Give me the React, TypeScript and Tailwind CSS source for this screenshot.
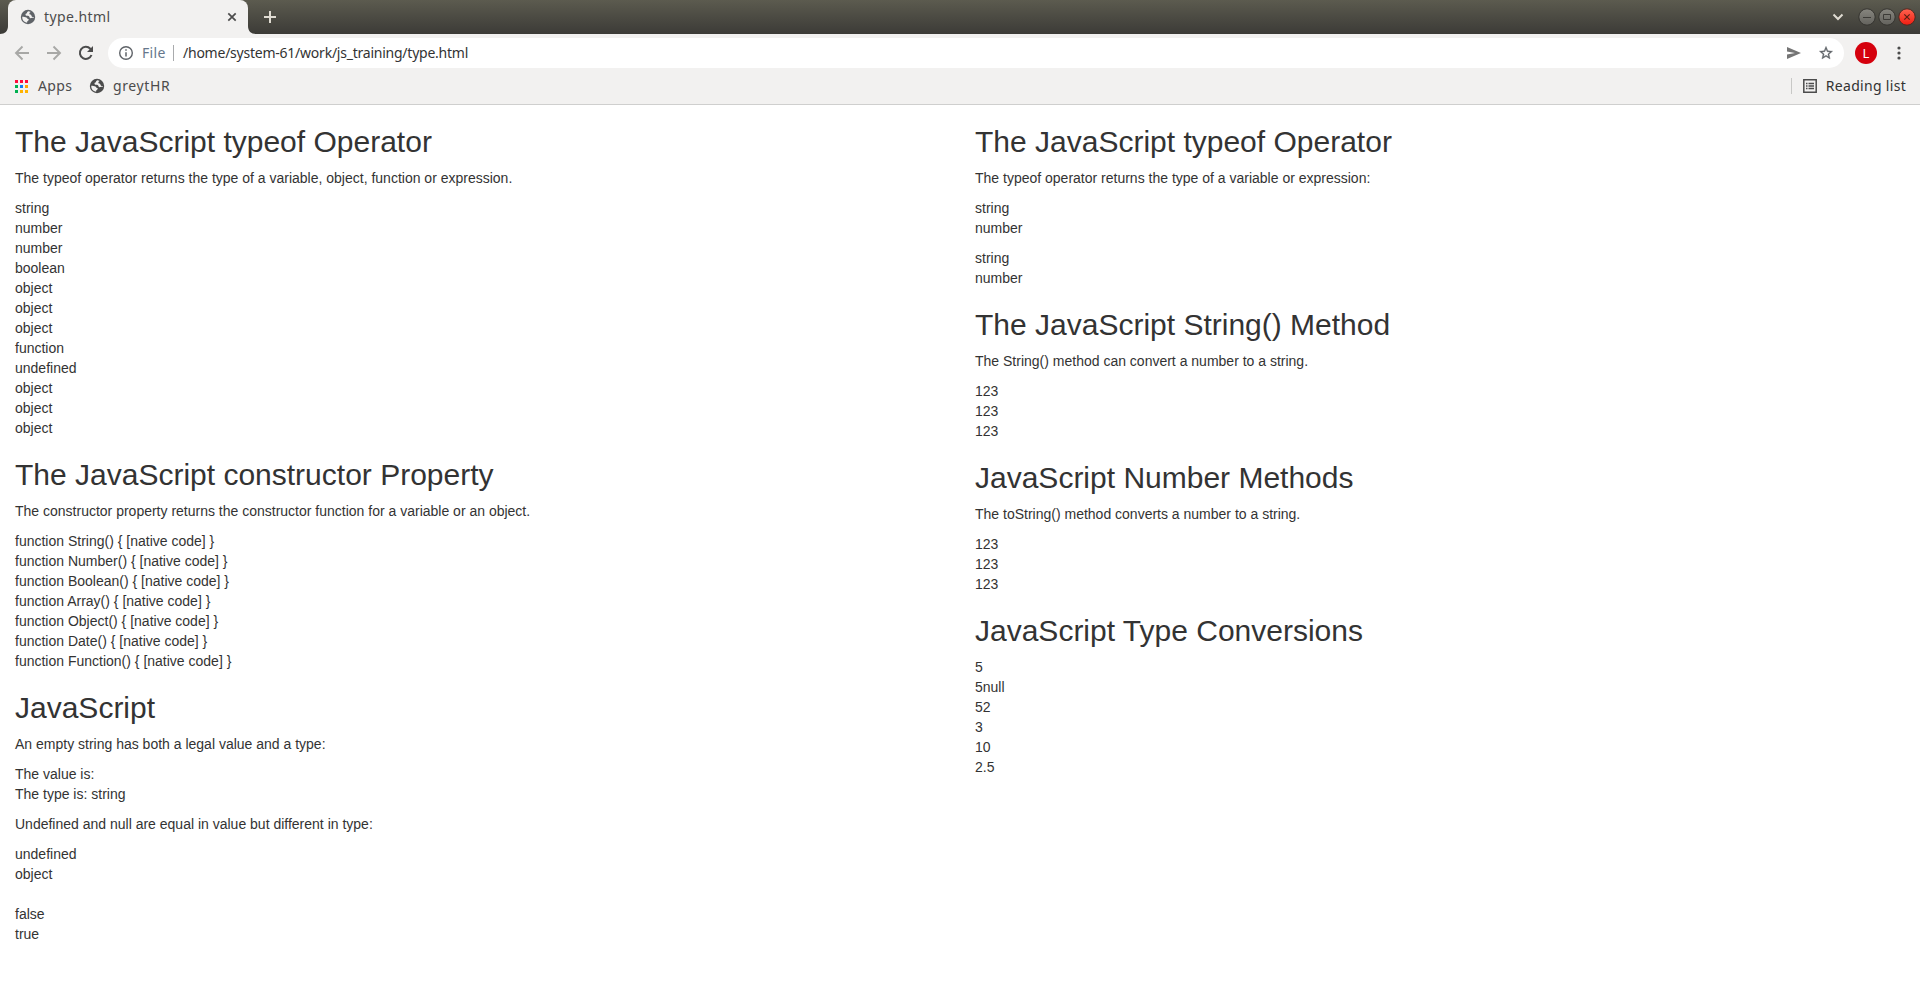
import React from "react";

type Block = { kind: "h" | "p"; lines: string[] };

const left: Block[] = [
  { kind: "h", lines: ["The JavaScript typeof Operator"] },
  { kind: "p", lines: ["The typeof operator returns the type of a variable, object, function or expression."] },
  {
    kind: "p",
    lines: ["string", "number", "number", "boolean", "object", "object", "object", "function", "undefined", "object", "object", "object"],
  },
  { kind: "h", lines: ["The JavaScript constructor Property"] },
  { kind: "p", lines: ["The constructor property returns the constructor function for a variable or an object."] },
  {
    kind: "p",
    lines: ["String", "Number", "Boolean", "Array", "Object", "Date", "Function"].map((n) => `function ${n}() { [native code] }`),
  },
  { kind: "h", lines: ["JavaScript"] },
  { kind: "p", lines: ["An empty string has both a legal value and a type:"] },
  { kind: "p", lines: ["The value is:", "The type is: string"] },
  { kind: "p", lines: ["Undefined and null are equal in value but different in type:"] },
  { kind: "p", lines: ["undefined", "object", "", "false", "true"] },
];

const right: Block[] = [
  { kind: "h", lines: ["The JavaScript typeof Operator"] },
  { kind: "p", lines: ["The typeof operator returns the type of a variable or expression:"] },
  { kind: "p", lines: ["string", "number"] },
  { kind: "p", lines: ["string", "number"] },
  { kind: "h", lines: ["The JavaScript String() Method"] },
  { kind: "p", lines: ["The String() method can convert a number to a string."] },
  { kind: "p", lines: ["123", "123", "123"] },
  { kind: "h", lines: ["JavaScript Number Methods"] },
  { kind: "p", lines: ["The toString() method converts a number to a string."] },
  { kind: "p", lines: ["123", "123", "123"] },
  { kind: "h", lines: ["JavaScript Type Conversions"] },
  { kind: "p", lines: ["5", "5null", "52", "3", "10", "2.5"] },
];

function Column({ blocks }: { blocks: Block[] }) {
  return (
    <div className="w-1/2 px-[15px]">
      {blocks.map((b, i) =>
        b.kind === "h" ? (
          <h2 key={i} className="mt-5 mb-2.5 text-[30px] leading-[33px] font-normal">
            {b.lines[0]}
          </h2>
        ) : (
          <p key={i} className="mb-2.5">
            {b.lines.map((l, j) => (
              <React.Fragment key={j}>
                {j > 0 && <br />}
                {l}
              </React.Fragment>
            ))}
          </p>
        )
      )}
    </div>
  );
}

function Globe({ className }: { className: string }) {
  return (
    <svg viewBox="0 0 16 16" className={className}>
      <circle cx="8" cy="8" r="7.2" fill="currentColor" />
      <path
        d="M8.600 2.300C7.600 2.500 6.900 3.200 6.900 4.200 6 4.300 5.400 4.900 5.500 5.800c.1.700.7 1 1.500 1 1.300 0 2.300.1 2.500 1.400.2.900 1 1.200 1.900.9.9-.4 1.800-.5 2.300-.3.100-.300.100-.600.100-.8-1.200.2-2-.1-2.200-1-.3-1.200-1.200-1.700-2.300-1.700 0-1.200.5-1.900 1.500-2.300ZM2.200 7.800c1.600 0 3.200.1 4.300.8.8.6.7 1.300 1.600 1.500.9.200.9.900.2 1.300-.9.500-1.200 1-1.200 2.300A5.800 5.800 0 0 1 2.200 7.800Z"
        fill="#f2f1f0"
      />
    </svg>
  );
}

const appColors = [
  "bg-[#ff0b3b]", "bg-[#ff0b3b]", "bg-[#ff0b3b]",
  "bg-[#00b050]", "bg-[#0f7cf5]", "bg-[#ffa200]",
  "bg-[#00b050]", "bg-[#ffb300]", "bg-[#ffb300]",
];

export default function App() {
  return (
    <div className="h-[988px] w-full overflow-hidden bg-white font-['Liberation_Sans',sans-serif] text-[14px] leading-5 text-[#333]">
      <div className="font-['Noto_Sans',sans-serif] text-[#4c4c4c]">
        <div className="flex h-[34px] items-start bg-linear-to-b from-[#5c5b4f] to-[#3c3b37]">
          <svg viewBox="0 0 8 34" className="h-[34px] w-2 shrink-0 text-[#f2f1f0]">
            <path d="M8 0v34H0c5 0 8-3 8-8Z" fill="currentColor" />
          </svg>
          <div className="flex h-[34px] w-[240px] items-center rounded-t-lg bg-[#f2f1f0] pl-3">
            <Globe className="size-4 text-[#5f6368]" />
            <span className="ml-2 text-[14px] tracking-[0.4px]">type.html</span>
            <svg viewBox="0 0 10 10" className="mr-[11px] ml-auto size-[10px]">
              <path d="m1.300 1.300 7.400 7.400m0-7.400L1.300 8.700" stroke="currentColor" strokeWidth="1.700" />
            </svg>
          </div>
          <svg viewBox="0 0 8 34" className="h-[34px] w-2 shrink-0">
            <path d="M0 0v34h8c-5 0-8-3-8-8Z" fill="#f2f1f0" />
          </svg>
          <svg viewBox="0 0 12 12" className="mt-[11px] ml-2 size-3">
            <path d="M6 0v12M0 6h12" stroke="#dfdbd2" strokeWidth="2" />
          </svg>
          <svg viewBox="0 0 12 8" className="mt-[13px] ml-auto h-2 w-3">
            <path d="m1.500 1.500 4.500 4.500 4.500-4.500" stroke="#dfdbd2" strokeWidth="2" fill="none" />
          </svg>
          <svg viewBox="0 0 60 20" className="mt-[7px] mr-[3px] ml-[13px] h-5 w-[60px]">
            <defs>
              <linearGradient id="gray" x2="0" y2="1">
                <stop stopColor="#87867f" />
                <stop offset="1" stopColor="#63625d" />
              </linearGradient>
              <linearGradient id="red" x2="0" y2="1">
                <stop stopColor="#ff6450" />
                <stop offset="1" stopColor="#f01c10" />
              </linearGradient>
            </defs>
            <circle cx="10" cy="10" r="8.200" fill="url(#gray)" stroke="#34332f" />
            <circle cx="30" cy="10" r="8.200" fill="url(#gray)" stroke="#34332f" />
            <circle cx="50" cy="10" r="8.200" fill="url(#red)" stroke="#4a2a22" />
            <path d="M6 10.500h8M26.500 7.500h7v5h-7Z" stroke="#3c3b37" fill="none" />
            <path d="m47.300 7.300 5.400 5.400m0-5.400-5.400 5.400" stroke="#5a2015" strokeWidth="1.200" />
          </svg>
        </div>

        <div className="flex h-[38px] items-center bg-[#f2f1f0]">
          <svg viewBox="0 0 16 16" className="ml-[14px] size-4 text-[#a8a8a6]">
            <path d="M15 8H2m6.500-6.500L2 8l6.500 6.500" stroke="currentColor" strokeWidth="1.900" fill="none" />
          </svg>
          <svg viewBox="0 0 16 16" className="ml-4 size-4 text-[#a8a8a6]">
            <path d="M1 8h13M7.500 1.500 14 8l-6.500 6.500" stroke="currentColor" strokeWidth="1.900" fill="none" />
          </svg>
          <svg viewBox="0 0 16 16" className="ml-4 size-4">
            <path d="M13.500 10A6 6 0 1 1 12.300 3.800L14 5.500" stroke="#4c4c4c" strokeWidth="2" fill="none" />
            <path d="M15 1v6H9Z" fill="#4c4c4c" />
          </svg>
          <div className="ml-[14px] flex h-[30px] w-[1736px] items-center rounded-full bg-white">
            <svg viewBox="0 0 16 16" className="ml-[10px] size-4 text-[#5f6368]">
              <circle cx="8" cy="8" r="6.300" stroke="currentColor" strokeWidth="1.400" fill="none" />
              <path d="M8 7.200v4.300M8 4.300v1.500" stroke="currentColor" strokeWidth="1.500" />
            </svg>
            <span className="ml-2 w-[24px] text-[14px] tracking-[0.3px] text-[#66778c]">File</span>
            <div className="ml-[7px] h-4 w-px bg-[#a9abad]" />
            <span className="ml-[9px] text-[14px] tracking-[-0.235px] whitespace-nowrap text-[#333]">/home/system-61/work/js_training/type.html</span>
            <svg viewBox="0 0 14 14" className="mr-[17px] ml-auto size-[14px]">
              <path d="M0 1v4.600L8 7 0 8.400V13l14-6Z" fill="#757575" />
            </svg>
            <svg viewBox="0 0 24 24" className="mr-[10px] size-4 text-[#5f6368]">
              <path d="M22 9.240l-7.190-.620L12 2 9.190 8.630 2 9.240l5.460 4.730L5.820 21 12 17.270 18.180 21l-1.630-7.030L22 9.240zM12 15.400l-3.760 2.270 1-4.280-3.320-2.880 4.380-.380L12 6.100l1.710 4.040 4.380.380-3.320 2.880 1 4.280L12 15.400z" fill="currentColor" stroke="currentColor" strokeWidth=".5" />
            </svg>
          </div>
          <div className="ml-[11px] flex size-[22px] items-center justify-center rounded-full bg-[#d5000d] text-[13px] text-white">L</div>
          <svg viewBox="0 0 4 14" className="ml-[20px] h-[14px] w-1">
            <g fill="#4c4c4c">
              <circle cx="2" cy="2" r="1.600" />
              <circle cx="2" cy="7" r="1.600" />
              <circle cx="2" cy="12" r="1.600" />
            </g>
          </svg>
        </div>

        <div className="flex h-[33px] items-center border-b border-[#cfcfce] bg-[#f2f1f0] pb-1">
          <div className="ml-[15px] grid grid-cols-3 gap-[2px]">
            {appColors.map((c, i) => (
              <div key={i} className={`size-[3px] ${c}`} />
            ))}
          </div>
          <span className="ml-[10px] w-[34px] text-[14px] tracking-[0.4px]">Apps</span>
          <Globe className="ml-[17px] size-4" />
          <span className="ml-2 text-[14px] tracking-[0.6px]">greytHR</span>
          <div className="ml-auto h-4 w-px bg-[#c8c8c6]" />
          <svg viewBox="0 0 14 14" className="ml-[11px] size-[14px]">
            <path d="M.8.800h12.400v12.400H.8Z" stroke="#4c4c4c" strokeWidth="1.500" fill="none" />
            <path d="M3 4.500h1.500m1 0H11M3 7h1.500m1 0H11M3 9.500h1.500m1 0H11" stroke="#4c4c4c" strokeWidth="1.300" />
          </svg>
          <span className="mr-[14px] ml-[9px] text-[14px] tracking-[0.3px] text-[#333]">Reading list</span>
        </div>
      </div>

      <div className="flex">
        <Column blocks={left} />
        <Column blocks={right} />
      </div>
    </div>
  );
}
